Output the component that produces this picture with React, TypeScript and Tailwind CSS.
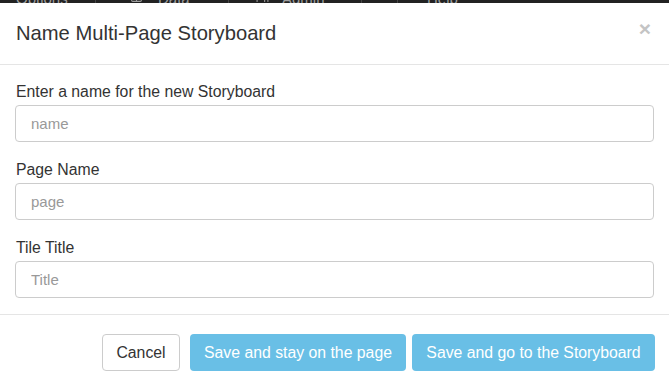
import React from "react";
import { Table, Users } from "lucide-react";

type Field = {
  label: string;
  placeholder: string;
};

const fields: Field[] = [
  { label: "Enter a name for the new Storyboard", placeholder: "name" },
  { label: "Page Name", placeholder: "page" },
  { label: "Tile Title", placeholder: "Title" },
];

const App = () => {
  return (
    <div className="w-[669px] h-[387px] bg-white overflow-hidden font-['Liberation_Sans',Arial,sans-serif] text-[#333]">
      {/* navbar peeking out behind the modal */}
      <div className="h-[3px] bg-[#222] overflow-hidden">
        <div className="flex items-end h-[3px] text-[15px] leading-[15px] text-[#9d9d9d] whitespace-nowrap">
          <span className="w-[95px] pl-[16px] -mb-[3px]">Options</span>
          <span className="h-full border-l border-[#444]" />
          <span className="w-[132px] pl-[34px] -mb-[3px] flex items-end">
            <Table size={13} className="mb-[3px]" />
            <span className="ml-[15px]">Data</span>
          </span>
          <span className="h-full border-l border-[#444]" />
          <span className="w-[132px] pl-[27px] -mb-[3px] flex items-end">
            <Users size={13} className="mb-[3px]" />
            <span className="ml-[13px]">Admin</span>
          </span>
          <span className="h-full border-l border-[#444]" />
          <span className="w-[35px]" />
          <span className="h-full border-l border-[#444]" />
          <span className="pl-[29px] -mb-[3px]">Help</span>
        </div>
      </div>

      <div className="flex items-center justify-between h-[62px] px-[16px] border-b border-[#e5e5e5]">
        <h4 className="text-[20.2px] leading-none -mt-[1px]">Name Multi-Page Storyboard</h4>
        <button className="text-[#c4c4c4] text-[21px] font-bold leading-none -mt-[11px] mr-[2px]">
          ×
        </button>
      </div>

      <div className="px-[15px] pt-[16px] pb-[16px] flex flex-col gap-[17px] border-b border-[#e5e5e5]">
        {fields.map((f) => (
          <div key={f.label} className="flex flex-col">
            <label className="text-[15.8px] leading-[21px] pl-[1px] mb-[3px]">{f.label}</label>
            <input
              placeholder={f.placeholder}
              className="h-[37px] w-full rounded-[4px] border border-[#ccc] px-[15px] text-[15px] placeholder:text-[#999] outline-none"
            />
          </div>
        ))}
      </div>

      <div className="flex justify-end items-center px-[14px] pt-[19px] text-[15.8px]">
        <button className="h-[37px] w-[78px] rounded-[4px] border border-[#ccc] bg-white text-[#333]">
          Cancel
        </button>
        <button className="ml-[10px] h-[37px] w-[216px] rounded-[4px] bg-[#69bfe6] text-white">
          Save and stay on the page
        </button>
        <button className="ml-[6px] h-[37px] w-[243px] rounded-[4px] bg-[#69bfe6] text-white">
          Save and go to the Storyboard
        </button>
      </div>
    </div>
  );
};

export default App;
